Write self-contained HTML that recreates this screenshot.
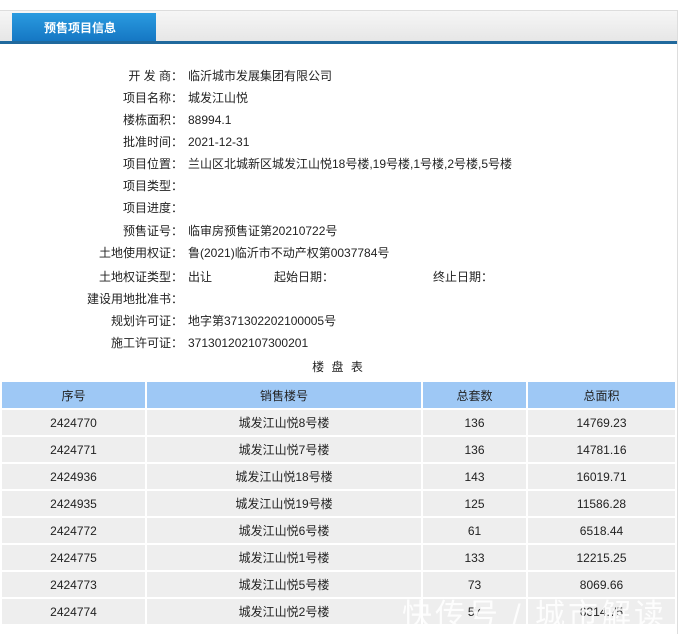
<!DOCTYPE html>
<html><head><meta charset="utf-8"><style>
body{margin:0;width:683px;height:634px;background:#fff;font-family:"Liberation Sans","Noto Sans CJK SC",sans-serif;font-size:12px;color:#222;position:relative;overflow:hidden}
.bar{position:absolute;left:0;top:10px;width:677px;height:31px;background:linear-gradient(#f6f6f6,#e6e6e6);border-top:1px solid #ddd}
.line{position:absolute;left:0;top:41px;width:677px;height:3px;background:#20699d}
.rb{position:absolute;left:677px;top:10px;width:1px;height:624px;background:#ddd}
.tab{position:absolute;left:12px;top:13px;width:144px;height:28px;background:linear-gradient(#2a9be0,#1577c4);color:#fff;font-weight:bold;font-size:12px;line-height:30px;text-indent:32px}
.r{position:absolute;left:0;width:683px;height:22px;line-height:22px}
.r b{position:absolute;right:500px;font-weight:normal;white-space:nowrap}
.r span{position:absolute;left:188px;white-space:nowrap}
.cap{position:absolute;left:0;width:677px;top:358px;text-align:center;letter-spacing:2px}
table{position:absolute;left:0;top:380px;width:677px;border-collapse:collapse}
td{height:25px;border:2px solid #fff;text-align:center;background:#eee;padding:0}
tr.h td{background:#9ec8f5;height:26px}
.wm{position:absolute;left:402px;top:590px;font-size:30px;color:rgba(255,255,255,.85);letter-spacing:3px;white-space:nowrap}
</style></head><body>
<div class="bar"></div><div class="line"></div><div class="rb"></div>
<div class="tab">预售项目信息</div>
<div class="r" style="top:65px"><b>开 发 商：</b><span>临沂城市发展集团有限公司</span></div>
<div class="r" style="top:87px"><b>项目名称：</b><span>城发江山悦</span></div>
<div class="r" style="top:109px"><b>楼栋面积：</b><span>88994.1</span></div>
<div class="r" style="top:131px"><b>批准时间：</b><span>2021-12-31</span></div>
<div class="r" style="top:153px"><b>项目位置：</b><span>兰山区北城新区城发江山悦18号楼,19号楼,1号楼,2号楼,5号楼</span></div>
<div class="r" style="top:175px"><b>项目类型：</b><span></span></div>
<div class="r" style="top:197px"><b>项目进度：</b><span></span></div>
<div class="r" style="top:220px"><b>预售证号：</b><span>临审房预售证第20210722号</span></div>
<div class="r" style="top:242px"><b>土地使用权证：</b><span>鲁(2021)临沂市不动产权第0037784号</span></div>
<div class="r" style="top:266px"><b>土地权证类型：</b><span>出让<i style="font-style:normal;position:absolute;left:86px">起始日期：</i><i style="font-style:normal;position:absolute;left:245px">终止日期：</i></span></div>
<div class="r" style="top:288px"><b>建设用地批准书：</b><span></span></div>
<div class="r" style="top:310px"><b>规划许可证：</b><span>地字第371302202100005号</span></div>
<div class="r" style="top:332px"><b>施工许可证：</b><span>371301202107300201</span></div>
<div class="cap">楼 盘 表</div>
<table>
<tr class="h"><td style="width:143px">序号</td><td style="width:274px">销售楼号</td><td style="width:103px">总套数</td><td>总面积</td></tr>
<tr><td>2424770</td><td>城发江山悦8号楼</td><td>136</td><td>14769.23</td></tr>
<tr><td>2424771</td><td>城发江山悦7号楼</td><td>136</td><td>14781.16</td></tr>
<tr><td>2424936</td><td>城发江山悦18号楼</td><td>143</td><td>16019.71</td></tr>
<tr><td>2424935</td><td>城发江山悦19号楼</td><td>125</td><td>11586.28</td></tr>
<tr><td>2424772</td><td>城发江山悦6号楼</td><td>61</td><td>6518.44</td></tr>
<tr><td>2424775</td><td>城发江山悦1号楼</td><td>133</td><td>12215.25</td></tr>
<tr><td>2424773</td><td>城发江山悦5号楼</td><td>73</td><td>8069.66</td></tr>
<tr><td>2424774</td><td>城发江山悦2号楼</td><td>57</td><td>6314.75</td></tr>
</table>
<div class="wm">快传号 / 城市解读</div>
</body></html>
